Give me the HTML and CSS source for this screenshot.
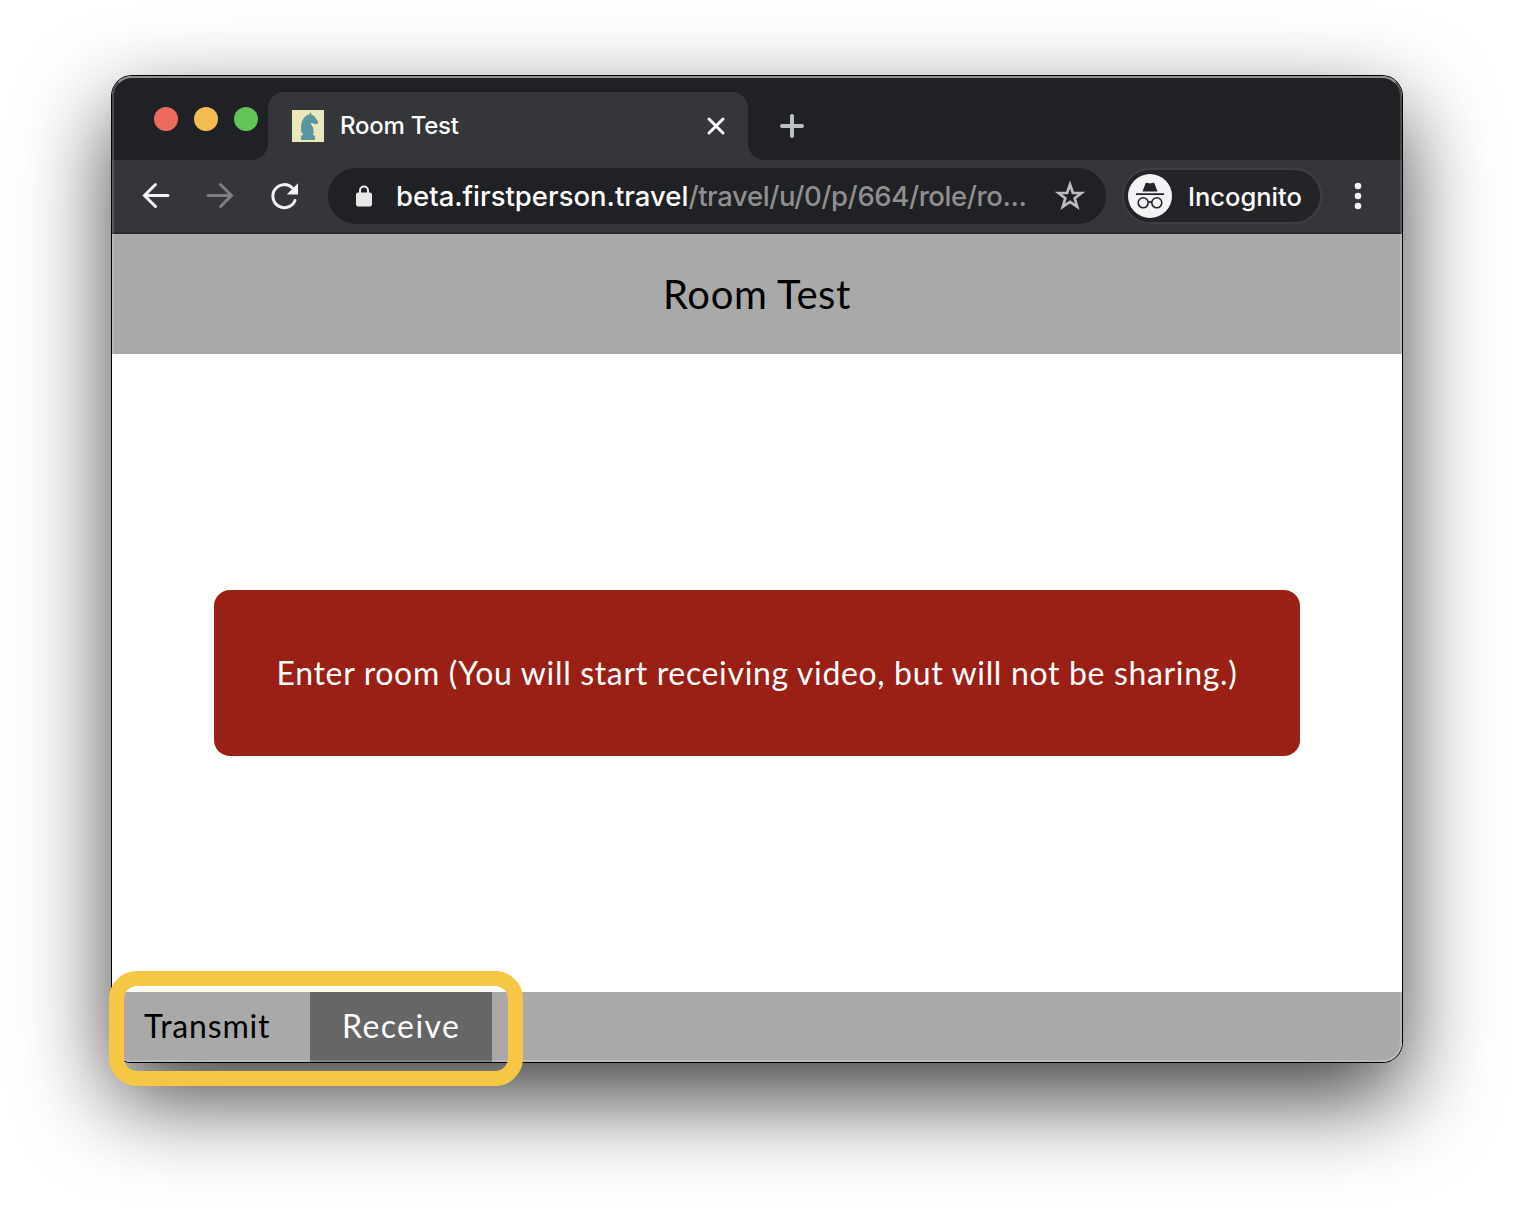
FILE: index.html
```html
<!DOCTYPE html>
<html lang="en">
<head>
<meta charset="utf-8">
<title>Room Test</title>
<link rel="stylesheet" href="styles.css">
</head>
<body>
<div class="window">
  <div class="tabstrip">
    <div class="lights"><span class="light red"></span><span class="light amber"></span><span class="light green"></span></div>
    <div class="tab">
      <svg class="favicon" viewBox="0 0 32 32"><path fill="#ece7b9" d="M0 0h32v32H0z"/><path fill="#58979f" d="M18.300 1.800l1.200 2.700 3 1.700 3.700 5.600-.7 2-2.300.4-3.800-1.400-.4 1.300 2.300 4 .4 4.700-1 1.700 2.300 1.200v4.300H9v-4.300l2.300-1.200L9.200 22c-.4-5.500-.1-10 2.300-13.500C13 6.300 15 5 17.500 4.300z"/></svg>
      <span class="tab-title">Room Test</span>
      <svg class="close" viewBox="0 0 20 20"><path d="M3 3l14 14M17 3L3 17"/></svg>
    </div>
    <svg class="plus" viewBox="0 0 24 24"><path d="M12 2v20M2 12h20"/></svg>
  </div>
  <div class="toolbar">
    <svg class="nav" viewBox="0 0 32 32"><path d="M28 15.500H5M15.500 4.500l-11 11 11 11"/></svg>
    <svg class="nav dim" viewBox="0 0 32 32"><path d="M4 15.500h23M16.500 4.500l11 11-11 11"/></svg>
    <svg class="nav reload" viewBox="0 0 32 32"><path d="M27 20.500A11.500 11.500 0 1 1 24.500 8"/><path class="solid" d="M30 3.200v11.300H18.700z"/></svg>
    <div class="address">
      <svg class="lock" viewBox="0 0 16 22"><path fill="none" stroke="#e8eaed" stroke-width="2" d="M4 9V5.500a4 4 0 0 1 8 0V9"/><rect y="7.500" width="16" height="14" rx="2" fill="#e8e8e8"/></svg>
      <span class="url"><span class="host">beta.firstperson.travel</span><span class="path">/travel/u/0/p/664/role/ro...</span></span>
      <svg class="star" viewBox="0 0 30 30"><path d="M15 3.500l2.900 8.300 8.700.2-6.900 5.300 2.500 8.500-7.200-5-7.200 5 2.500-8.500-6.900-5.300 8.700-.2z"/></svg>
    </div>
    <div class="incognito">
      <svg class="spy" viewBox="0 0 44 44"><circle cx="22" cy="22" r="22" fill="#f1f3f4"/><path fill="#252428" d="M14.500 17.500l3-8.100q.4-1 1.500-.7l3 .8 3-.8q1.100-.3 1.500.7l3 8.100zM8 19.300h28v1.700H8z"/><g fill="none" stroke="#252428" stroke-width="1.600"><circle cx="15.200" cy="28.800" r="5"/><circle cx="28.800" cy="28.800" r="5"/><path d="M20 28.500q2-1.200 4 0"/></g></svg>
      <span class="incognito-label">Incognito</span>
    </div>
    <svg class="menu" viewBox="0 0 8 28"><circle cx="4" cy="4" r="3.300"/><circle cx="4" cy="14" r="3.300"/><circle cx="4" cy="24" r="3.300"/></svg>
  </div>
  <header class="page-header"><span class="page-title">Room Test</span></header>
  <main class="stage"><div class="enter"><span class="enter-label">Enter room (You will start receiving video, but will not be sharing.)</span></div></main>
  <footer class="tabs"><div class="mode"><span class="transmit">Transmit</span></div><div class="mode active"><span class="receive">Receive</span></div></footer>
  <div class="rim"></div>
  <div class="highlight"></div>
</div>
</body>
</html>
```
FILE: styles.css
```css
* { box-sizing: border-box; }
body { margin: 0; padding: 76px 112px 148px; background: #fff; height: 1210px; overflow: hidden; }
svg { display: block; flex: none; }
span { white-space: nowrap; }
.window { position: relative; width: 1290px; height: 986px; display: flex; flex-direction: column; border-radius: 20px; background: #fff; box-shadow: 0 0 0 1px #000, 0 36px 90px rgba(0,0,0,.75); font-family: Lato, sans-serif; }
.tabstrip { height: 84px; display: flex; align-items: flex-start; background: #202124; border-radius: 20px 20px 0 0; padding-top: 16px; }
.lights { display: flex; gap: 16px; padding: 15px 0 0 42px; width: 156px; }
.light { width: 24px; height: 24px; border-radius: 50%; flex: none; }
.red { background: #ed6a5e; }
.amber { background: #f5bd4f; }
.green { background: #61c454; }
.tab { position: relative; width: 480px; height: 68px; background: #35363a; border-radius: 16px 16px 0 0; display: flex; align-items: center; padding: 0 22px 0 24px; }
.tab::before, .tab::after { content: ""; position: absolute; bottom: 0; width: 16px; height: 16px; }
.tab::before { left: -16px; background: radial-gradient(circle at 0 0, transparent 15.500px, #35363a 16px); }
.tab::after { right: -16px; background: radial-gradient(circle at 100% 0, transparent 15.500px, #35363a 16px); }
.favicon { width: 32px; height: 32px; }
.tab-title { margin-left: 16px; font: 450 24px/32px Inter, sans-serif; letter-spacing: -.25px; color: #fff; }
.close { width: 20px; height: 20px; margin-left: auto; fill: none; stroke: #fff; stroke-width: 3; stroke-linecap: round; }
.plus { width: 24px; height: 24px; margin: 22px 0 0 32px; fill: none; stroke: #bdc1c6; stroke-width: 4; stroke-linecap: round; }
.toolbar { height: 74px; background: #35363a; border-bottom: 2px solid #282828; display: flex; align-items: center; padding: 0 40px 0 28px; }
.nav { width: 32px; height: 32px; margin-right: 32px; fill: none; stroke: #f1f3f4; stroke-width: 3; stroke-linecap: round; }
.nav.dim { stroke: #7e7e80; }
.reload { margin-right: 28px; }
.reload .solid { fill: #f1f3f4; stroke: none; }
.address { width: 778px; height: 56px; border-radius: 28px; background: #202124; display: flex; align-items: center; padding: 0 21px 0 28px; }
.lock { width: 16px; height: 22px; }
.url { margin-left: 24px; width: 640px; font: 500 27.500px/40px Inter, sans-serif; }
.host { color: #fff; letter-spacing: 0; }
.path { color: #8f8f91; letter-spacing: -.4px; }
.star { width: 30px; height: 30px; margin-left: auto; fill: none; stroke: #bdbdbf; stroke-width: 2.700; }
.incognito { width: 200px; height: 56px; margin-left: 16px; border: 2px solid #3f3e43; border-radius: 28px; background: #242428; display: flex; align-items: center; padding-left: 4px; }
.spy { width: 44px; height: 44px; }
.incognito-label { margin-left: 16px; padding-top: 2px; font: 500 25.500px/40px Inter, sans-serif; color: #fff; }
.menu { width: 8px; height: 28px; margin-left: auto; fill: #f1f3f4; }
.page-header { height: 120px; background: #a9a9a9; display: flex; align-items: center; justify-content: center; font-size: 40px; letter-spacing: .6px; color: #000; }
.stage { flex: 1; display: flex; align-items: center; justify-content: center; }
.enter { width: 1086px; height: 166px; padding-bottom: 2px; border-radius: 16px; background: #9a1f14; color: #fff; display: flex; align-items: center; justify-content: center; font-size: 32px; letter-spacing: .66px; }
.tabs { height: 70px; background: #a9a9a9; border-radius: 0 0 20px 20px; display: flex; font-size: 32px; }
.mode { width: 198px; display: flex; align-items: center; padding: 0 0 3px 32px; letter-spacing: .8px; }
.mode.active { width: 182px; background: #666; color: #fff; letter-spacing: 1.400px; }
.rim { position: absolute; inset: 0; border-radius: 20px; border: 2px solid rgba(255,255,255,.18); border-top-color: rgba(255,255,255,.5); }
.highlight { position: absolute; left: -3px; top: 895px; width: 414px; height: 115px; border: 15px solid #f6c744; border-radius: 28px; }
```
